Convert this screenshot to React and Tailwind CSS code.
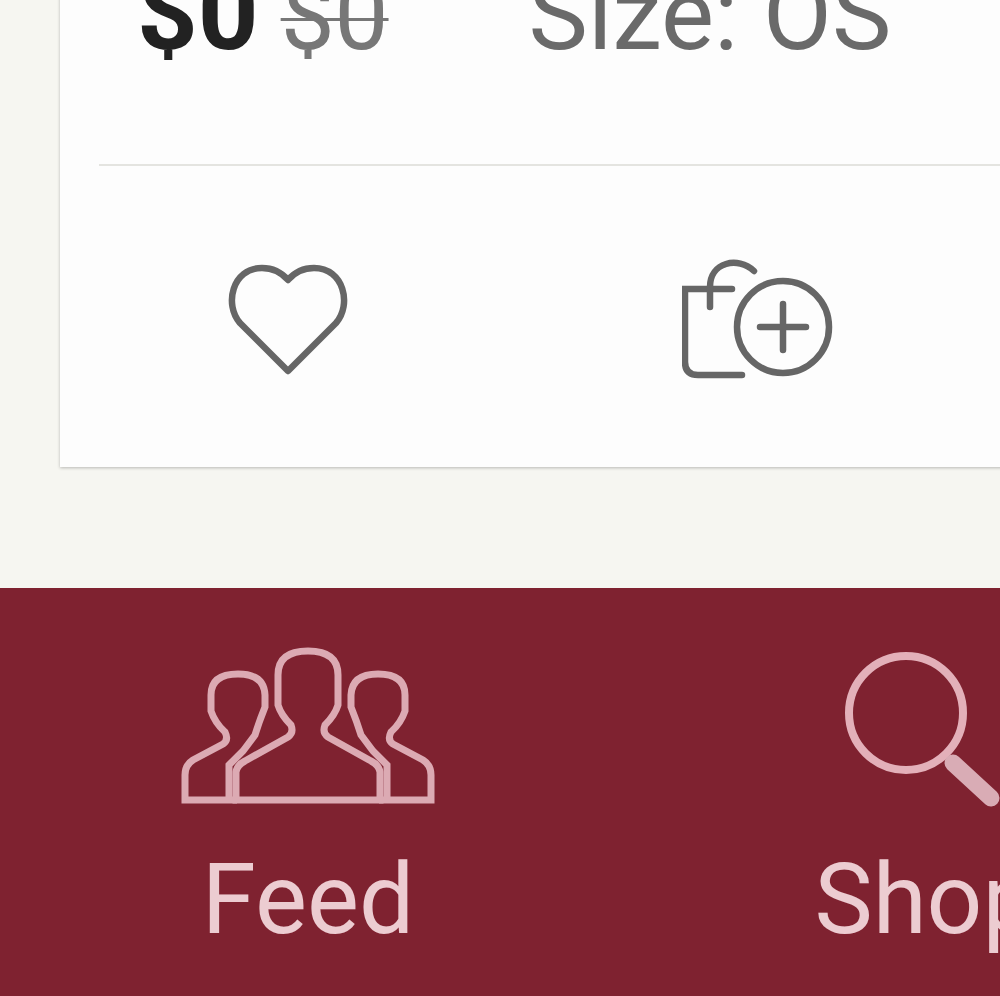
import React from 'react'

function HeartIcon() {
  return (
    <svg width="120" height="112" viewBox="0 0 120 112" fill="none" stroke="#666" strokeWidth="6.5" strokeLinejoin="round">
      <path d="M60 107 L12 59 C-4 41 4 4 34 4 C46 4 54 9 60 16 C66 9 74 4 86 4 C116 4 124 41 108 59 Z" />
    </svg>
  )
}

function BagAddIcon() {
  return (
    <svg width="152" height="121" viewBox="0 0 152 121" fill="none" stroke="#666" strokeWidth="6.5" strokeLinecap="round">
      <path d="M50 30 H3 V103 Q3 116 16 116 H60" />
      <path d="M28 48 V28 C28 3 56 -3 72 12" />
      <circle cx="101" cy="68" r="46" />
      <path d="M101 45 V91 M78 68 H124" />
    </svg>
  )
}

function FeedIcon() {
  const side = 'M56 153 H4 V128 Q4 118 12 113 L42 97 Q48 93 44 85 Q34 76 30 64 L30 48 Q30 27 57 27 Q83 27 84 48 L84 60 Q78 75 74 88 L62 104 L48 118 V153'
  return (
    <svg width="254" height="158" viewBox="0 0 254 158" fill="none" stroke="#dcaab3" strokeWidth="7">
      <path d={side} />
      <path d={side} transform="translate(254 0) scale(-1 1)" />
      <path d="M55 153 V125 Q56 118 64 114 L107 90 Q113 86 110 78 Q100 68 97 58 L97 28 Q97 4 127 4 Q157 4 157 28 L157 58 Q154 68 144 78 Q141 86 147 90 L190 114 Q198 118 199 125 V153 Z" />
    </svg>
  )
}

function SearchIcon() {
  return (
    <svg width="160" height="158" viewBox="0 0 160 158" fill="none" stroke="#e3b0b9">
      <circle cx="61" cy="61" r="57" strokeWidth="8" />
      <path d="M108 111 L146 146" strokeWidth="17" strokeLinecap="round" stroke="#d9acb5" />
    </svg>
  )
}

export default function App() {
  return (
    <div className="h-[996px] w-[1000px] overflow-hidden flex flex-col justify-end bg-[#f6f6f1] font-['Roboto',sans-serif]">
      <div className="shrink-0 ml-[60px] w-[1000px] bg-[#fdfdfd] shadow-[0_1px_3px_rgba(0,0,0,0.25)]">
        <div className="flex items-baseline pl-[77px] text-[100px] leading-[100px]">
          <span className="text-[106px] font-bold text-[#222]">$0</span>
          <span className="ml-[22px] text-[96px] text-[#777] line-through decoration-[3px]">$0</span>
          <span className="ml-[140px] text-[#6a6a6a]">Size: OS</span>
        </div>
        <div className="ml-[39px] mt-[98px] h-[2px] bg-[#e4e4e0]"></div>
        <div className="flex items-center h-[301px] pt-[6px]">
          <div className="w-[456px] flex justify-center"><HeartIcon /></div>
          <div className="w-[484px] flex justify-center"><BagAddIcon /></div>
        </div>
      </div>
      <nav className="shrink-0 mt-[121px] h-[408px] bg-[#7f2230] flex items-start pt-[59px] text-[98px] leading-[100px] text-[#ecccd1]">
        <div className="shrink-0 w-[616px] flex flex-col items-center">
          <FeedIcon />
          <span className="mt-[45px]">Feed</span>
        </div>
        <div className="shrink-0 w-[620px] flex flex-col items-center">
          <div className="mt-[5px] mr-[2px]"><SearchIcon /></div>
          <span className="mt-[40px]">Shop</span>
        </div>
      </nav>
    </div>
  )
}
